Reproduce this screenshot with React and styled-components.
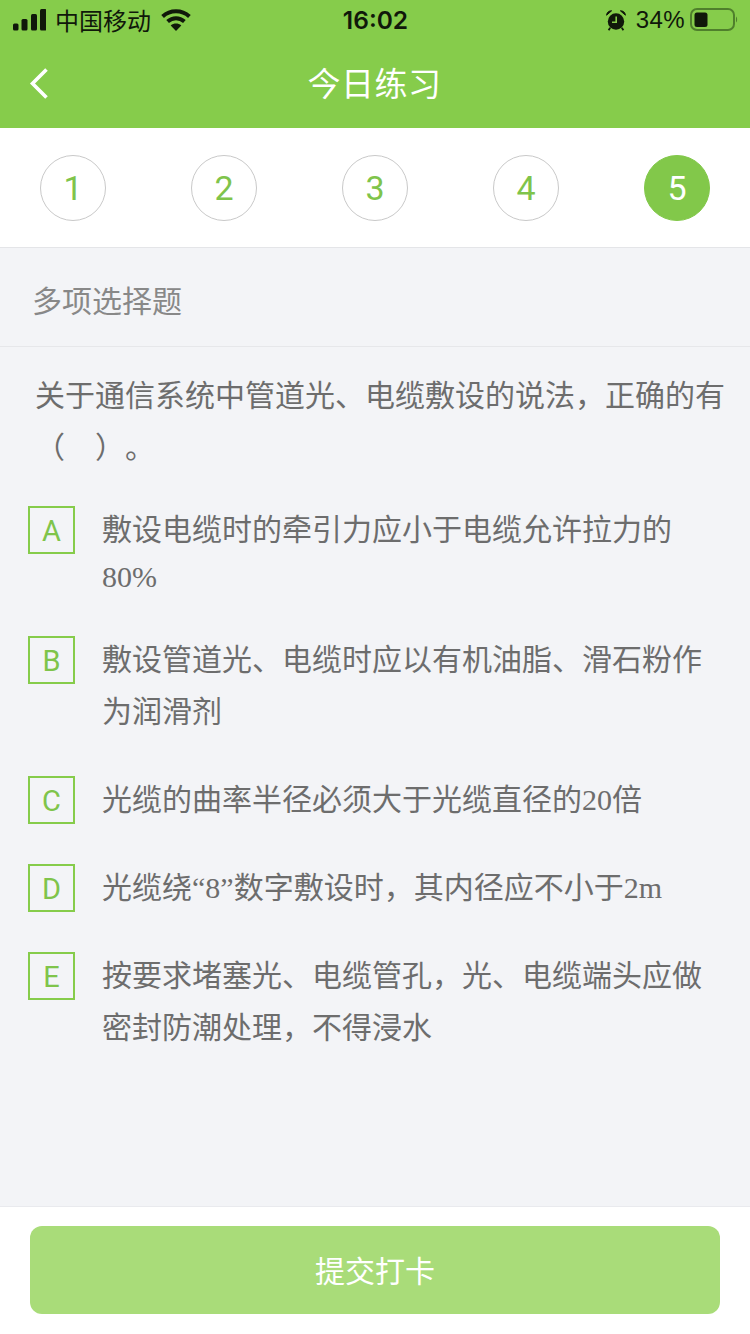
import styled, { createGlobalStyle } from 'styled-components'

const GlobalStyle = createGlobalStyle`
    * {
        box-sizing: border-box;
    }

    body {
        margin: 0;
        background: #f3f4f7;
        font-family: "Liberation Sans", "Noto Sans CJK SC", sans-serif;
        text-spacing-trim: space-all;
    }
`

const questionFont = `"Liberation Serif", "Noto Sans CJK SC", serif`

const steps = [1, 2, 3, 4, 5]

const options = [
    { key: 'A', text: '敷设电缆时的牵引力应小于电缆允许拉力的', tail: '80%' },
    { key: 'B', text: '敷设管道光、电缆时应以有机油脂、滑石粉作为润滑剂' },
    { key: 'C', text: '光缆的曲率半径必须大于光缆直径的20倍' },
    { key: 'D', text: '光缆绕“8”数字敷设时，其内径应不小于2m' },
    { key: 'E', text: '按要求堵塞光、电缆管孔，光、电缆端头应做密封防潮处理，不得浸水' },
]

const Page = styled.div`
    display: flex;
    flex-direction: column;
    width: 750px;
    height: 1334px;
    overflow: hidden;
    background: #f3f4f7;
`

const Header = styled.header`
    height: 128px;
    background: #86cc4b;
`

const StatusBar = styled.div`
    display: grid;
    grid-template-columns: 1fr auto 1fr;
    align-items: center;
    height: 40px;
    padding: 0 12px 0 13px;
    color: #10180a;
    font-size: 24px;
`

const StatusLeft = styled.div`
    display: flex;
    align-items: center;
    gap: 9px;
`

const Carrier = styled.span`
    margin-right: 1px;
    font-family: "Noto Sans CJK SC", sans-serif;
    line-height: 40px;
`

const Clock = styled.span`
    font-family: Inter, sans-serif;
    font-weight: 600;
    font-size: 24.5px;
`

const StatusRight = styled.div`
    display: flex;
    align-items: center;
    justify-content: flex-end;
    gap: 5px;
`

const Percent = styled.span`
    margin-left: 5px;
    letter-spacing: 0.4px;
`

const NavBar = styled.div`
    position: relative;
    display: flex;
    align-items: center;
    justify-content: center;
    height: 88px;
`

const BackIcon = styled.svg`
    position: absolute;
    left: 29px;
    top: 27px;
`

const Title = styled.h1`
    margin: 0 0 4px -1px;
    color: #fff;
    font-family: "Noto Sans CJK SC", sans-serif;
    font-size: 33px;
    font-weight: 400;
    letter-spacing: 0.5px;
`

const StepBar = styled.div`
    display: flex;
    justify-content: space-between;
    height: 120px;
    padding: 27px 40px 0;
    background: #fff;
    border-bottom: 1px solid #e4e5e8;
`

const Step = styled.div`
    display: flex;
    align-items: center;
    justify-content: center;
    width: 66px;
    height: 66px;
    border-radius: 50%;
    border: 1px solid ${props => props.$active ? '#82c84a' : '#c9c9c9'};
    background: ${props => props.$active ? '#82c84a' : '#fff'};
    color: ${props => props.$active ? '#fff' : '#7fc44b'};
    font-family: Roboto, "Liberation Sans", sans-serif;
    font-size: 34px;
    font-weight: 400;
`

const SectionLabel = styled.div`
    height: 99px;
    padding: 0 32px;
    border-bottom: 1px solid #e6e7ea;
    color: #888;
    font-size: 30px;
    line-height: 108px;
`

const Question = styled.p`
    margin: 0;
    padding: 23px 25px 30px 35px;
    color: #6d6d6d;
    font-family: ${questionFont};
    font-size: 30px;
    line-height: 52px;
`

const OptionList = styled.div`
    display: flex;
    flex-direction: column;
    gap: 36px;
    padding: 0 45px 0 28px;
`

const OptionRow = styled.div`
    display: flex;
    align-items: flex-start;
    gap: 27px;
`

const OptionKey = styled.div`
    flex: none;
    display: flex;
    align-items: center;
    justify-content: center;
    width: 47px;
    height: 48px;
    margin-top: 2px;
    padding-top: 2px;
    border: 2px solid #86cc4b;
    color: #7fc44b;
    font-family: Roboto, "Liberation Sans", sans-serif;
    font-size: 29px;
    font-weight: 400;
`

const OptionText = styled.div`
    flex: 1;
    color: #6d6d6d;
    font-family: ${questionFont};
    font-size: 30px;
    line-height: 52px;
`

const OptionTail = styled.span`
    display: block;
    line-height: 42px;
`

const Footer = styled.footer`
    margin-top: auto;
    height: 128px;
    padding: 19px 30px 0;
    background: #fff;
    border-top: 1px solid #e9eaee;
`

const SubmitButton = styled.button`
    display: block;
    width: 100%;
    height: 88px;
    padding: 0 0 3px;
    border: 0;
    border-radius: 12px;
    background: #a9dc79;
    color: #fff;
    font-family: "Noto Sans CJK SC", sans-serif;
    font-size: 30px;
`

const SignalIcon = () => (
    <svg width="33" height="22" viewBox="0 0 33 22" fill="currentColor">
        <rect x="0" y="14.5" width="5.5" height="7" rx="1.5" />
        <rect x="8.5" y="10" width="6" height="11.5" rx="1.5" />
        <rect x="18" y="5" width="6" height="16.5" rx="1.5" />
        <rect x="27" y="0" width="6.5" height="21.5" rx="1.5" />
    </svg>
)

const WifiIcon = () => (
    <svg width="30" height="22" viewBox="0 0 30 22" fill="none" stroke="currentColor" strokeWidth="4">
        <path d="M1.6 7.4C9.2 0.6 20.8 0.6 28.4 7.4" />
        <path d="M6.6 12.6C11.6 8.2 18.4 8.2 23.4 12.6" />
        <path d="M15 22L9.7 16.4C12.8 14 17.2 14 20.3 16.4Z" fill="currentColor" stroke="none" />
    </svg>
)

const AlarmIcon = () => (
    <svg width="20" height="21" viewBox="0 0 20 21">
        <circle cx="10" cy="11.5" r="8.2" fill="currentColor" />
        <path d="M0.6 5.2C0.8 2.6 2.6 0.8 5.6 0.8ZM19.4 5.2C19.2 2.6 17.4 0.8 14.4 0.8Z" fill="currentColor" stroke="currentColor" strokeWidth="1" />
        <path d="M4.2 17.8L2.6 20.2M15.8 17.8L17.4 20.2" stroke="currentColor" strokeWidth="1.8" />
        <path d="M10.2 6.4V12.2H6" fill="none" stroke="#86cc4b" strokeWidth="1.6" />
    </svg>
)

const BatteryIcon = () => (
    <svg width="48" height="24" viewBox="0 0 48 24">
        <rect x="1" y="1" width="43" height="21" rx="6" fill="none" stroke="#4f7f2c" strokeWidth="2" />
        <rect x="4.5" y="4.5" width="13" height="14.5" rx="2.5" fill="currentColor" />
        <path d="M46 8.5C47.5 9.5 47.5 13.5 46 14.5Z" fill="#4f7f2c" />
    </svg>
)

const App = () => {
    return <Page>
        <GlobalStyle />
        <Header>
            <StatusBar>
                <StatusLeft>
                    <SignalIcon />
                    <Carrier>中国移动</Carrier>
                    <WifiIcon />
                </StatusLeft>
                <Clock>16:02</Clock>
                <StatusRight>
                    <AlarmIcon />
                    <Percent>34%</Percent>
                    <BatteryIcon />
                </StatusRight>
            </StatusBar>
            <NavBar>
                <BackIcon width="22" height="34" viewBox="0 0 22 34" fill="none" stroke="#fff" strokeWidth="3.6">
                    <path d="M17.5 2.5L3.5 16.5L17.5 30.5" />
                </BackIcon>
                <Title>今日练习</Title>
            </NavBar>
        </Header>
        <StepBar>
            {steps.map(n => <Step key={n} $active={n === 5}>{n}</Step>)}
        </StepBar>
        <SectionLabel>多项选择题</SectionLabel>
        <Question>关于通信系统中管道光、电缆敷设的说法，正确的有（　）。</Question>
        <OptionList>
            {options.map(o => <OptionRow key={o.key}>
                <OptionKey>{o.key}</OptionKey>
                <OptionText>
                    {o.text}
                    {o.tail ? <OptionTail>{o.tail}</OptionTail> : null}
                </OptionText>
            </OptionRow>)}
        </OptionList>
        <Footer>
            <SubmitButton>提交打卡</SubmitButton>
        </Footer>
    </Page>
}

export default App
